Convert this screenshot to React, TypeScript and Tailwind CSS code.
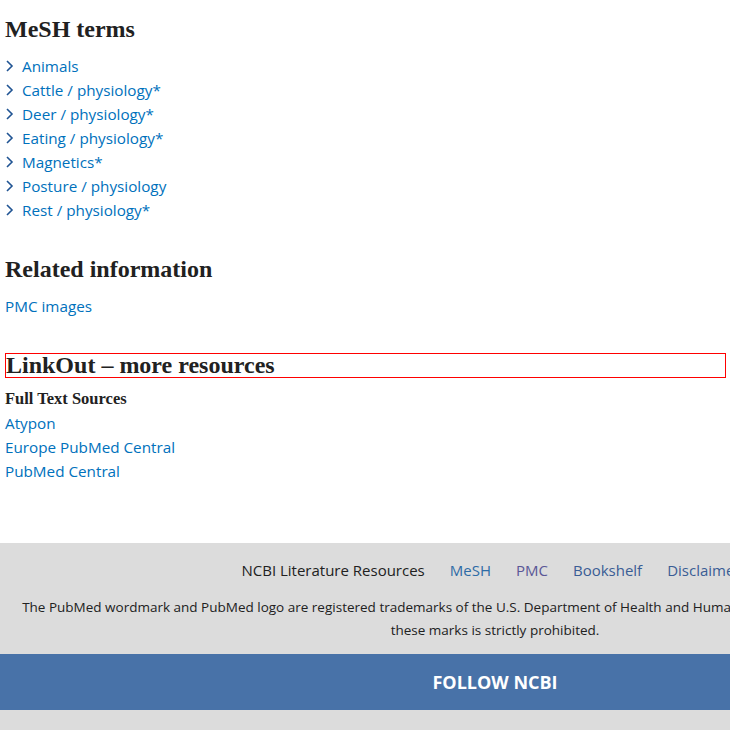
import React from "react";

const meshTerms = [
  "Animals",
  "Cattle / physiology*",
  "Deer / physiology*",
  "Eating / physiology*",
  "Magnetics*",
  "Posture / physiology",
  "Rest / physiology*",
];

const fullText = ["Atypon", "Europe PubMed Central", "PubMed Central"];

const Chevron = () => (
  <svg width="9" height="14" viewBox="0 0 9 14" className="shrink-0">
    <path d="M2 2 L7 7 L2 12" fill="none" stroke="#205493" strokeWidth="1.6" />
  </svg>
);

const App = () => {
  return (
    <div className="w-[730px] overflow-hidden bg-white font-['Open_Sans',sans-serif] text-[#212121]">
      <div className="w-[726px] pl-[5px] pt-[15px]">
        {/* MeSH terms */}
        <h2 className="font-['Liberation_Serif',serif] text-[24px] font-bold leading-[28px]">MeSH terms</h2>
        <ul className="mt-[11px]">
          {meshTerms.map((term) => (
            <li key={term} className="flex items-center gap-[8px] text-[15.25px] leading-[24px] text-[#0071bc]">
              <Chevron />
              <a href="#">{term}</a>
            </li>
          ))}
        </ul>

        {/* Related information */}
        <h2 className="mt-[33px] font-['Liberation_Serif',serif] text-[24px] font-bold leading-[28px]">Related information</h2>
        <a href="#" className="mt-[11px] block text-[15.25px] leading-[24px] text-[#0071bc]">PMC images</a>

        {/* LinkOut */}
        <h2 className="mt-[35px] border border-[#ff0000] font-['Liberation_Serif',serif] text-[24px] font-bold leading-[23px]">
          LinkOut – more resources
        </h2>
        <h3 className="mt-[10px] font-['Liberation_Serif',serif] text-[16.5px] font-bold leading-[22px]">Full Text Sources</h3>
        <ul className="mt-[1px]">
          {fullText.map((s) => (
            <li key={s} className="text-[15.25px] leading-[24px] text-[#0071bc]">
              <a href="#">{s}</a>
            </li>
          ))}
        </ul>
      </div>

      {/* Footer */}
      <footer className="mt-[60px] w-[990px] bg-[#dcdcdc]">
        <div className="flex justify-center gap-[25px] pr-[8px] pt-[16px] text-[15px] leading-[22px]">
          <span className="text-[#212121]">NCBI Literature Resources</span>
          <a href="#" className="text-[#2e6ba6]">MeSH</a>
          <a href="#" className="text-[#5a5797]">PMC</a>
          <a href="#" className="text-[#3a5d95]">Bookshelf</a>
          <a href="#" className="text-[#3a5d95]">Disclaimer</a>
        </div>
        <p className="mx-auto mt-[15px] w-[964px] text-center text-[13.5px] leading-[23px] text-[#212121]">
          The PubMed wordmark and PubMed logo are registered trademarks of the U.S. Department of Health and Human Services (HHS). Unauthorized use of these marks is strictly prohibited.
        </p>
        <div className="mt-[12px] flex h-[56px] items-center justify-center bg-[#4872a8] text-[18px] font-bold text-white">
          FOLLOW NCBI
        </div>
        <div className="h-[40px]" />
      </footer>
    </div>
  );
};

export default App;
